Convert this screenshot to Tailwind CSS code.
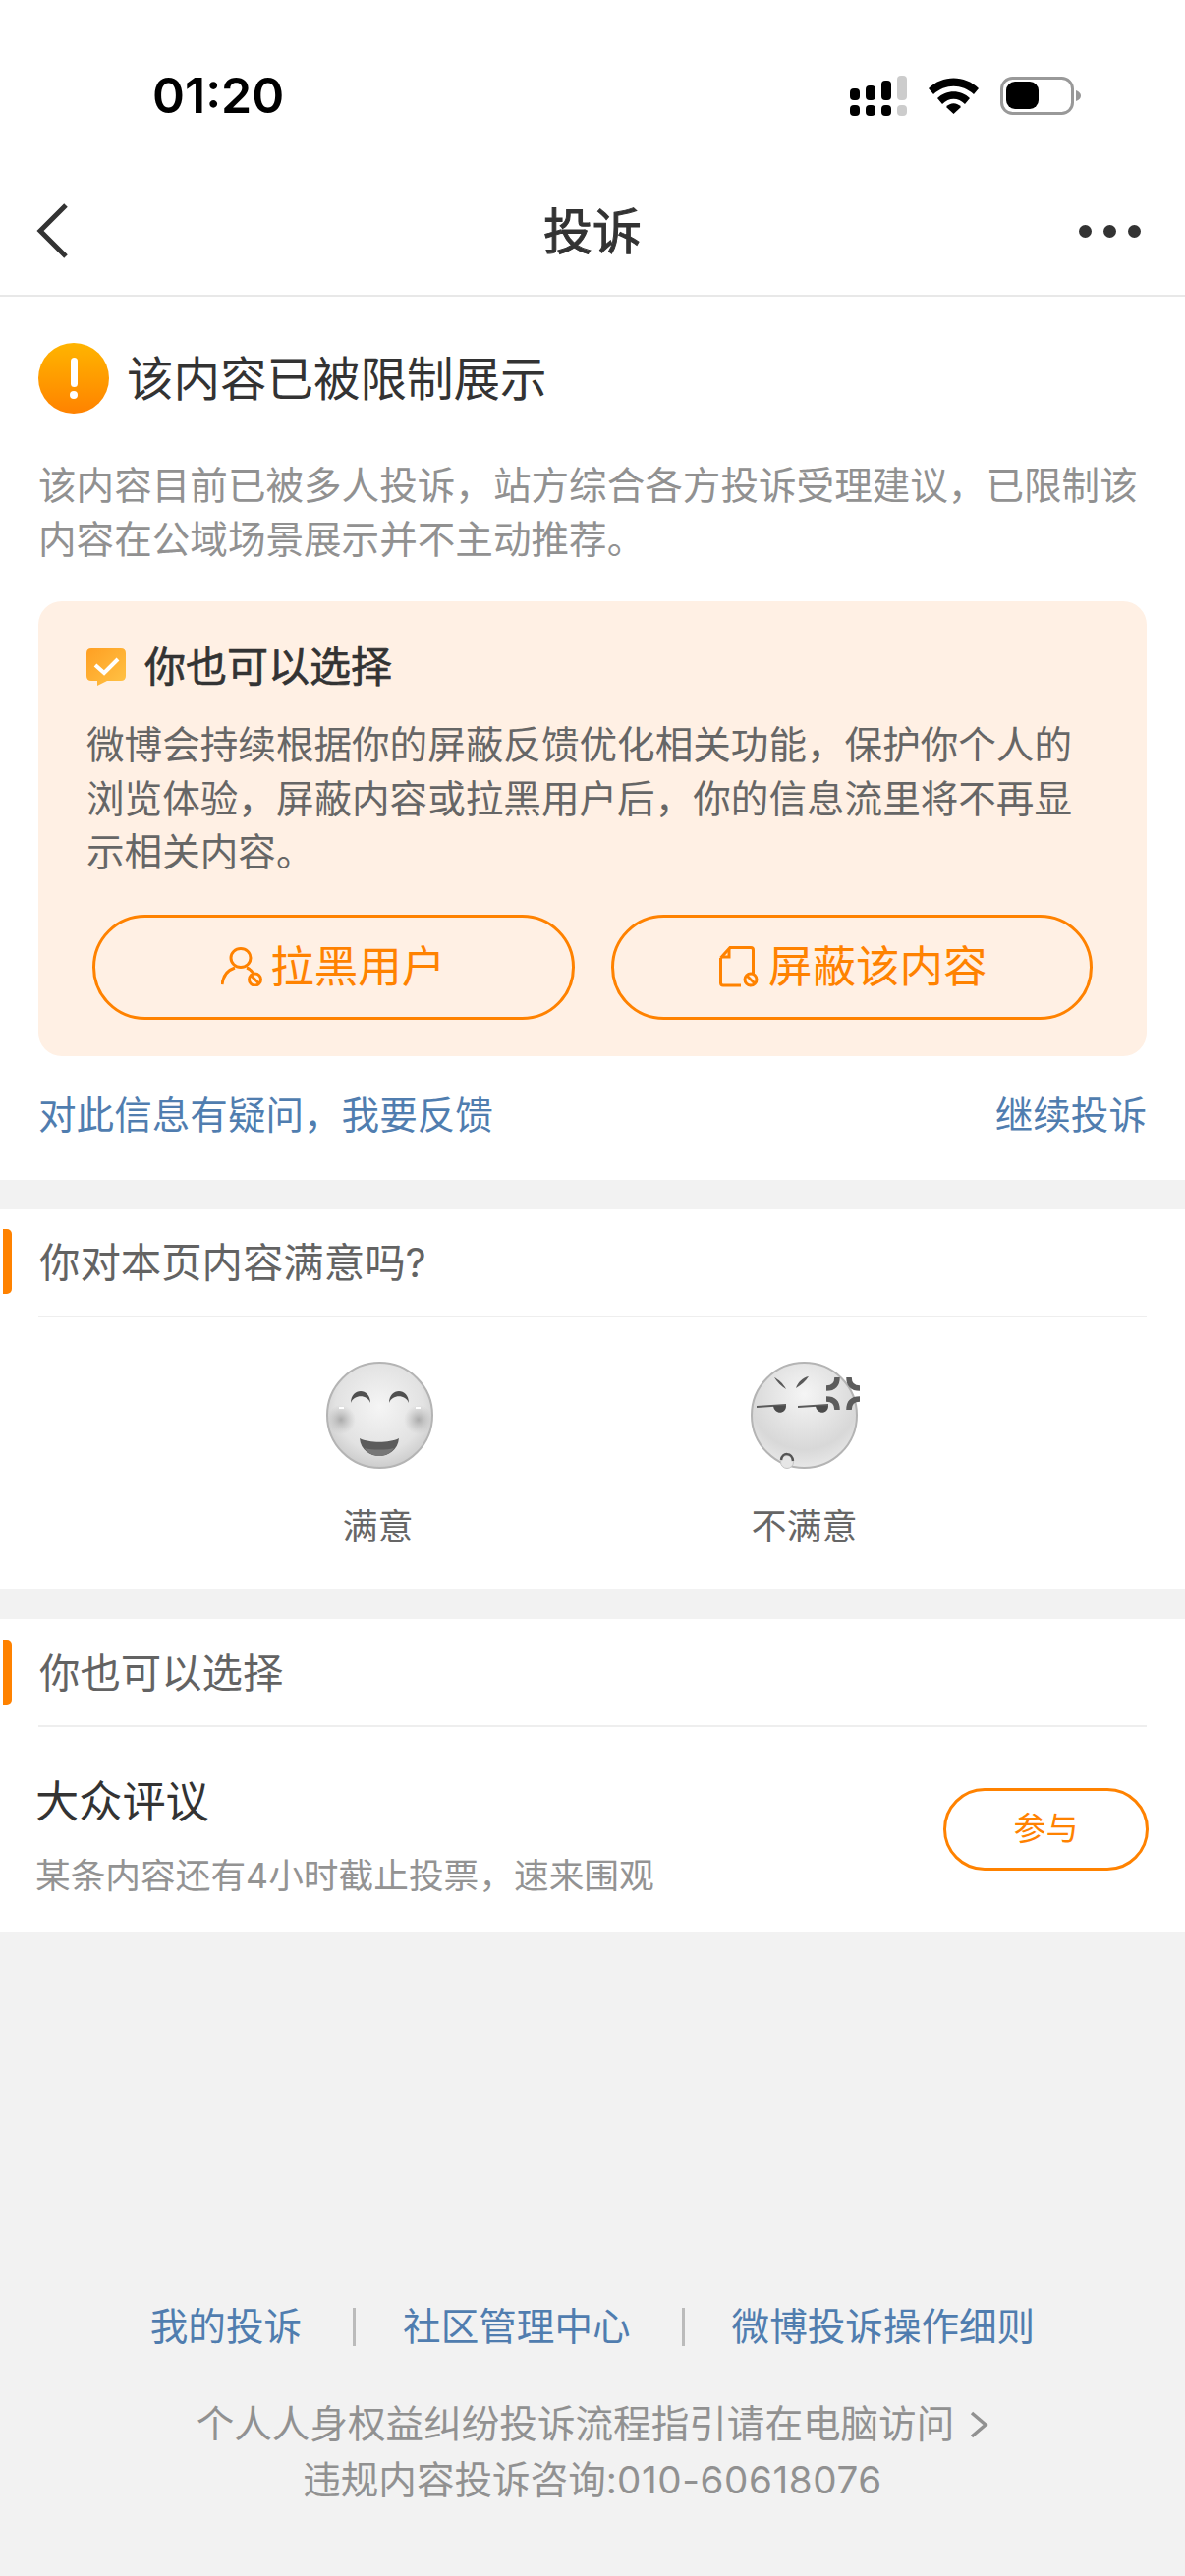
<!DOCTYPE html>
<html lang="zh-CN">
<head>
    <meta charset="UTF-8">
    <meta name="viewport" content="width=device-width, initial-scale=1.0">
    <title>投诉</title>
    <script src="https://cdn.jsdelivr.net/npm/@tailwindcss/browser@4"></script>
</head>
<body class="bg-[#f2f2f2] font-['Inter','Noto_Sans_CJK_SC',sans-serif] text-[#333]">
<div class="w-[1206px] h-[2622px] overflow-hidden">

    <!-- status bar -->
    <div class="bg-white h-[130px] pt-[64px] pl-[155px] pr-[106px] flex items-center justify-between">
        <span class="text-[50px] leading-none font-semibold text-black">01:20</span>
        <div class="flex items-center">
            <svg class="w-[58px] h-[41px]" viewBox="0 0 58 41">
                <rect x="0" y="13" width="10" height="12" rx="4" fill="#000"/>
                <rect x="16" y="10" width="10" height="15" rx="4" fill="#000"/>
                <rect x="32" y="5" width="10" height="20" rx="4" fill="#000"/>
                <rect x="48" y="0" width="10" height="25" rx="4" fill="#ccc"/>
                <rect x="0" y="30" width="10" height="11" rx="4" fill="#000"/>
                <rect x="16" y="30" width="10" height="11" rx="4" fill="#000"/>
                <rect x="32" y="30" width="10" height="11" rx="4" fill="#000"/>
                <rect x="48" y="30" width="10" height="11" rx="4" fill="#ccc"/>
            </svg>
            <svg class="w-[51px] h-[37px] ml-[22px]" viewBox="0 0 51 37">
                <path d="M0 11 C14 -3 37 -3 51 11 L46 17 C34 6 17 6 5 17 Z" fill="#000"/>
                <path d="M9 21 C18 12 33 12 42 21 L37 27 C30 20 21 20 14 27 Z" fill="#000"/>
                <path d="M18 30 C22 25 29 25 33 30 L25.500 37 Z" fill="#000"/>
            </svg>
            <svg class="w-[82px] h-[39px] ml-[22px]" viewBox="0 0 82 39">
                <rect x="1.500" y="1.500" width="72" height="36" rx="11" fill="none" stroke="#999" stroke-width="3"/>
                <rect x="6" y="5" width="33" height="28" rx="9" fill="#000"/>
                <path d="M77 14 Q82 16 82 19.500 Q82 23 77 25 Z" fill="#999"/>
            </svg>
        </div>
    </div>

    <!-- nav -->
    <div class="bg-white h-[172px] pt-[40px] pl-[37px] pr-[45px] flex items-center justify-between relative border-b-[2px] border-[#e8e8e8]">
        <svg class="w-[32px] h-[56px]" viewBox="0 0 32 56">
            <path d="M30 2 L4 28 L30 54" fill="none" stroke="#333" stroke-width="5"/>
        </svg>
        <span class="absolute left-0 right-0 top-[73px] text-center text-[50px] leading-[66px] text-[#333] [-webkit-text-stroke:1px_#333]">投诉</span>
        <div class="flex gap-[12px]">
            <span class="w-[13px] h-[13px] rounded-full bg-[#333]"></span>
            <span class="w-[13px] h-[13px] rounded-full bg-[#333]"></span>
            <span class="w-[13px] h-[13px] rounded-full bg-[#333]"></span>
        </div>
    </div>

    <!-- notice -->
    <div class="bg-white h-[899px] pt-[47px] px-[39px]">
        <div class="flex items-center h-[72px]">
            <div class="w-[72px] h-[72px] rounded-full bg-gradient-to-b from-[#ffb400] to-[#ff8200] flex flex-col items-center justify-center">
                <span class="w-[7px] h-[30px] rounded-full bg-white"></span>
                <span class="w-[8px] h-[8px] rounded-full bg-white mt-[4px]"></span>
            </div>
            <h1 class="ml-[18px] mt-[2px] text-[47.500px] leading-[72px] text-[#333]">该内容已被限制展示</h1>
        </div>
        <p class="mt-[46px] text-[38.600px] leading-[55px] text-[#919191]">该内容目前已被多人投诉，站方综合各方投诉受理建议，已限制该内容在公域场景展示并不主动推荐。</p>

        <div class="mt-[35px] bg-[#fff0e4] rounded-[24px] h-[463px] pt-[38px] px-[49px]">
            <div class="flex items-center h-[58px]">
                <svg class="w-[40px] h-[38px]" viewBox="0 0 40 38">
                    <defs>
                        <linearGradient id="chk" x1="0" y1="0" x2="1" y2="1">
                            <stop offset="0" stop-color="#ff9f22"/>
                            <stop offset="1" stop-color="#ffc346"/>
                        </linearGradient>
                    </defs>
                    <path d="M5 0 H35 Q40 0 40 5 V28 Q40 33 35 33 H21 L11 38 V33 H5 Q0 33 0 28 V5 Q0 0 5 0 Z" fill="url(#chk)"/>
                    <path d="M9 17 L18 25 L32 11" fill="none" stroke="#fff" stroke-width="4"/>
                </svg>
                <h2 class="ml-[19px] text-[42px] leading-[58px] text-[#333] [-webkit-text-stroke:0.7px_#333]">你也可以选择</h2>
            </div>
            <p class="mt-[23px] text-[38.600px] leading-[54.600px] text-[#666]">微博会持续根据你的屏蔽反馈优化相关功能，保护你个人的浏览体验，屏蔽内容或拉黑用户后，你的信息流里将不再显示相关内容。</p>
            <div class="mt-[36px] mx-[6px] flex gap-[37px]">
                <button class="flex-1 h-[107px] rounded-full border-[3px] border-[#ff8200] flex items-center justify-center text-[44.500px] text-[#ff8200]">
                    <svg class="w-[42px] h-[40px] mr-[8px]" viewBox="0 0 42 40" fill="none" stroke="#ff8200" stroke-width="3">
                        <ellipse cx="20" cy="11" rx="10" ry="9.500"/>
                        <path d="M1 38 C2 28 8 23 14 21 M26 21 C29 22 31 24 33 27"/>
                        <circle cx="34.500" cy="33" r="6"/>
                        <path d="M30.500 29 L38.500 37"/>
                    </svg>
                    拉黑用户
                </button>
                <button class="flex-1 h-[107px] rounded-full border-[3px] border-[#ff8200] flex items-center justify-center text-[44.500px] text-[#ff8200]">
                    <svg class="w-[40px] h-[42px] ml-[3px] mr-[10px]" viewBox="0 0 40 42" fill="none" stroke="#ff8200" stroke-width="3">
                        <path d="M1.500 12 L11 1.500 H32 Q34.500 1.500 34.500 4 V28 M22 40 H4 Q1.500 40 1.500 37.500 V12"/>
                        <path d="M10 3 V11 H2"/>
                        <circle cx="32" cy="34" r="6"/>
                        <path d="M28 30 L36 38"/>
                    </svg>
                    屏蔽该内容
                </button>
            </div>
        </div>

        <div class="mt-[33px] flex justify-between text-[38.600px] leading-[55px] text-[#507daf]">
            <span>对此信息有疑问，我要反馈</span>
            <span>继续投诉</span>
        </div>
    </div>

    <!-- satisfaction -->
    <div class="bg-white mt-[30px] pt-[20px]">
        <div class="flex items-center">
            <span class="ml-[3px] w-[9px] h-[66px] rounded-r-[5px] bg-[#ff8200]"></span>
            <h3 class="ml-[28px] h-[66px] text-[41.400px] leading-[68px] text-[#636363]">你对本页内容满意吗?</h3>
        </div>
        <div class="mt-[22px] mx-[39px] h-[2px] bg-[#eee]"></div>
        <div class="pt-[45px] pb-[38px] pr-[3px] flex justify-center gap-[234px]">
            <div class="w-[200px] flex flex-col items-center">
                <svg class="w-[109px] h-[109px] ml-[3px]" viewBox="0 0 109 109">
                    <defs>
                        <radialGradient id="face" cx="0.5" cy="0.42" r="0.6">
                            <stop offset="0" stop-color="#f5f5f5"/>
                            <stop offset="0.7" stop-color="#e2e2e2"/>
                            <stop offset="1" stop-color="#c9c9c9"/>
                        </radialGradient>
                        <radialGradient id="cheek">
                            <stop offset="0" stop-color="#a4a4a4" stop-opacity="0.9"/>
                            <stop offset="1" stop-color="#bbb" stop-opacity="0"/>
                        </radialGradient>
                    </defs>
                    <circle cx="54.500" cy="54.500" r="53.500" fill="url(#face)" stroke="#b4b4b4" stroke-width="2"/>
                    <circle cx="15" cy="59" r="15" fill="url(#cheek)"/>
                    <circle cx="94" cy="59" r="15" fill="url(#cheek)"/>
                    <path d="M25 42 C25 26 45 26 45 42 C42 33 28 33 25 42 Z" fill="#4f4f4f"/>
                    <path d="M64 42 C64 26 84 26 84 42 C81 33 67 33 64 42 Z" fill="#4f4f4f"/>
                    <path d="M13 47 H18 M91 47 H96" stroke="#fff" stroke-width="2"/>
                    <path d="M34 78 C44 83 64 83 74 78 C73 90 63 96 54 96 C45 96 35 90 34 78 Z" fill="#5c5c5c"/>
                    <path d="M39 88 C46 90 62 90 69 88 C65 94 59 96 54 96 C49 96 43 94 39 88 Z" fill="#777"/>
                </svg>
                <span class="mt-[34px] text-[36px] leading-[50px] text-[#666]">满意</span>
            </div>
            <div class="w-[200px] flex flex-col items-center">
                <svg class="w-[109px] h-[109px] overflow-visible" viewBox="0 0 109 109">
                    <defs>
                        <radialGradient id="face2" cx="0.5" cy="0.3" r="0.75">
                            <stop offset="0" stop-color="#f5f5f5"/>
                            <stop offset="0.7" stop-color="#d8d8d8"/>
                            <stop offset="1" stop-color="#ececec"/>
                        </radialGradient>
                    </defs>
                    <circle cx="54.500" cy="54.500" r="53.500" fill="url(#face2)" stroke="#b4b4b4" stroke-width="2"/>
                    <path d="M24 16 C28 18 33 22 36 28 C31 25 27 21 24 16 Z M59 15 C53 16 48 21 46 27 C51 24 56 20 59 15 Z" fill="#5a5a5a"/>
                    <path d="M6 45 L36 43 V45 L6 47 Z M48 45 L79 43 V45 L48 47 Z" fill="#5a5a5a"/>
                    <path d="M23 45 H36 C36 54 24 54 23 45 Z M66 45 H79 C79 54 67 54 66 45 Z" fill="#4c4c4c"/>
                    <path d="M88 16 Q88 27 77 27 M100 16 Q100 27 111 27 M77 38 Q88 38 88 49 M111 38 Q100 38 100 49" fill="none" stroke="#5c5c5c" stroke-width="5.500"/>
                    <circle cx="37" cy="102" r="6.500" fill="#e6e6e6" stroke="#c4c4c4"/>
                    <path d="M31 100 C32 92 42 92 43 101" fill="none" stroke="#555" stroke-width="2.500"/>
                </svg>
                <span class="mt-[34px] text-[36px] leading-[50px] text-[#666]">不满意</span>
            </div>
        </div>
    </div>

    <!-- options -->
    <div class="bg-white mt-[31px] pt-[21px]">
        <div class="flex items-center">
            <span class="ml-[3px] w-[9px] h-[66px] rounded-r-[5px] bg-[#ff8200]"></span>
            <h3 class="ml-[28px] h-[66px] text-[41.400px] leading-[68px] text-[#636363]">你也可以选择</h3>
        </div>
        <div class="mt-[21px] mx-[39px] h-[2px] bg-[#eee]"></div>
        <div class="pt-[46px] pb-[33px] pl-[36px] pr-[37px] flex items-center justify-between">
            <div>
                <div class="text-[44.200px] leading-[60px] text-[#333]">大众评议</div>
                <div class="mt-[20px] text-[35.700px] leading-[50px] text-[#939393]">某条内容还有4小时截止投票，速来围观</div>
            </div>
            <button class="w-[209px] h-[84px] mb-[14px] rounded-full border-[3px] border-[#ff8200] text-[33px] text-[#ff8200]">参与</button>
        </div>
    </div>

    <!-- footer -->
    <div class="mt-[374px] flex items-center justify-center text-[38.600px] leading-[55px] text-[#507daf]">
        <span>我的投诉</span>
        <span class="ml-[52px] mr-[48px] w-[3px] h-[39px] bg-[#bbb]"></span>
        <span>社区管理中心</span>
        <span class="ml-[52px] mr-[48px] w-[3px] h-[39px] bg-[#bbb]"></span>
        <span>微博投诉操作细则</span>
    </div>
    <div class="mt-[43px] text-[38.600px] leading-[57px] text-[#919191] text-center">
        <div class="flex items-center justify-center">
            <span>个人人身权益纠纷投诉流程指引请在电脑访问</span>
            <svg class="w-[20px] h-[28px] ml-[15px]" viewBox="0 0 20 28">
                <path d="M3 2 L17 14 L3 26" fill="none" stroke="#919191" stroke-width="3.500"/>
            </svg>
        </div>
        <div>违规内容投诉咨询:<span class="tracking-[0.6px]">010-60618076</span></div>
    </div>

</div>
</body>
</html>
